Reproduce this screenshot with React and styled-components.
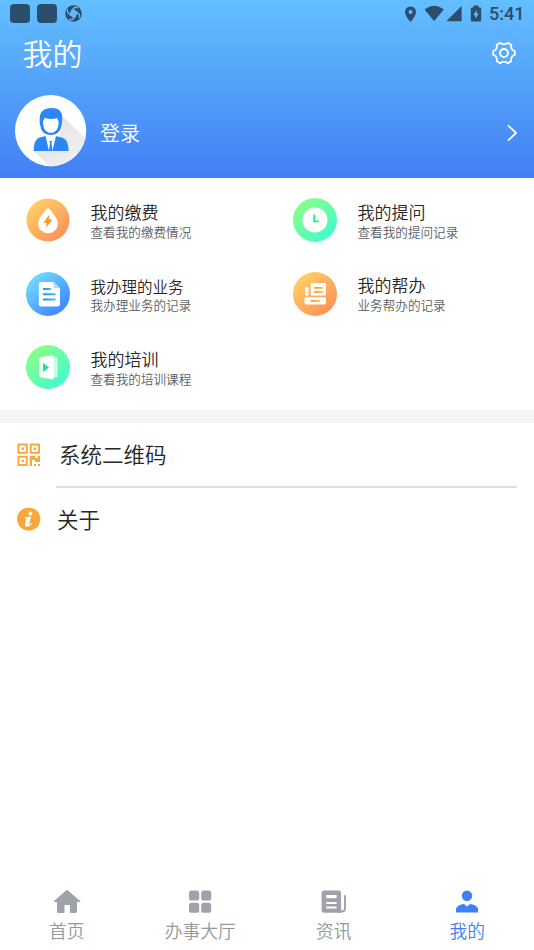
import styled, { createGlobalStyle } from "styled-components"

const menus = [
    { icon: "fee", title: "我的缴费", desc: "查看我的缴费情况", top: "4px" },
    { icon: "ask", title: "我的提问", desc: "查看我的提问记录", top: "4px" },
    { icon: "work", title: "我办理的业务", desc: "我办理业务的记录", small: true },
    { icon: "help", title: "我的帮办", desc: "业务帮办的记录" },
    { icon: "train", title: "我的培训", desc: "查看我的培训课程" },
];

const tabs = [
    { icon: "home", label: "首页" },
    { icon: "hall", label: "办事大厅" },
    { icon: "news", label: "资讯" },
    { icon: "mine", label: "我的", active: true },
];

const circleColors = {
    fee: ["#ffcf66", "#ff9159"],
    ask: ["#8bff86", "#42fbd0"],
    work: ["#72dcff", "#3f83ff"],
    help: ["#ffcf66", "#ff9159"],
    train: ["#8bff86", "#42fbd0"],
};

const MenuIcon = ({ name }) => (
    <svg width="44" height="44" viewBox="0 0 44 44">
        <defs>
            <linearGradient id={"bg-" + name} x1="0.15" y1="0.1" x2="0.85" y2="0.9">
                <stop offset="0" stopColor={circleColors[name][0]} />
                <stop offset="1" stopColor={circleColors[name][1]} />
            </linearGradient>
            <linearGradient id="line-blue" x1="0" x2="1">
                <stop offset="0" stopColor="#1688ff" />
                <stop offset="1" stopColor="#46c3fb" />
            </linearGradient>
            <linearGradient id="line-orange" x1="0" x2="1">
                <stop offset="0" stopColor="#ff8a1e" />
                <stop offset="1" stopColor="#ffbd55" />
            </linearGradient>
        </defs>
        <circle cx="22" cy="22" r={name === "fee" ? 21.5 : 22} fill={`url(#bg-${name})`} />
        {name === "fee" && (
            <>
                <path d="M22 9.5C19 13.5 12.2 19 12.2 26a9.8 9.3 0 0 0 19.6 0C31.8 19 25 13.5 22 9.5Z" fill="#fff" />
                <path d="M23.4 16.6 17.4 24.8h3.6l-1.3 5 6.9-8.3h-3.7Z" fill="#ff951c" />
            </>
        )}
        {name === "ask" && (
            <>
                <circle cx="22" cy="22" r="12.5" fill="#fff" />
                <path d="M21.2 16.5v6.8h4.8" fill="none" stroke="#24ed91" strokeWidth="1.8" />
            </>
        )}
        {name === "work" && (
            <>
                <path d="M15 10h12.5l6.5 6.3V32a2.5 2.5 0 0 1-2.5 2.5H15a2.2 2.2 0 0 1-2.2-2.2v-20A2.2 2.2 0 0 1 15 10Z" fill="#fff" />
                <path d="M27.5 10v4.8a1.5 1.5 0 0 0 1.5 1.5h5Z" fill="#b9d9ff" />
                <rect x="16.8" y="16" width="8.5" height="2" rx="1" fill="url(#line-blue)" />
                <rect x="16.8" y="21.3" width="13" height="2" rx="1" fill="url(#line-blue)" />
                <rect x="16.8" y="26.5" width="13" height="2" rx="1" fill="url(#line-blue)" />
            </>
        )}
        {name === "help" && (
            <>
                <rect x="12" y="15" width="3.5" height="8.5" rx="1" fill="#fff" />
                <rect x="17.7" y="11" width="15.2" height="12.5" rx="1" fill="#fff" />
                <rect x="21" y="15" width="9" height="1.8" rx=".9" fill="url(#line-orange)" />
                <rect x="21" y="19" width="9" height="1.8" rx=".9" fill="url(#line-orange)" />
                <path d="M12.5 25.3h19.4a1 1 0 0 1 1 1v4.2a2 2 0 0 1-2 2H13.5a2 2 0 0 1-2-2v-4.2a1 1 0 0 1 1-1Z" fill="#fff" />
                <rect x="17.5" y="28" width="9.5" height="1.7" rx=".8" fill="url(#line-orange)" />
            </>
        )}
        {name === "train" && (
            <>
                <path d="M27 11.5l2.5.4v20.4l-2.5.4Z" fill="#c8ffe9" />
                <path d="M29.4 12.2l2 .6v18.8l-2 .6Z" fill="#dcfff2" />
                <path d="M14.8 12 26 10.6q1.8 0 1.8 1.6v20.5q0 1.6-1.8 1.5l-11.2-2q-1.6-.3-1.6-1.6V13.5q0-1.3 1.6-1.5Z" fill="#fff" />
                <path d="M17 17.7v9.3l6-4.6Z" fill="#1ee58a" />
            </>
        )}
    </svg>
)

const TabIcon = ({ name }) => (
    <svg width="28" height="26" viewBox="0 0 28 26" fill="currentColor">
        {name === "home" && (
            <path d="M14 1.8 27.3 13.2q.4.7-.4.7H24v9.7q0 1.4-1.4 1.4h-4.7q-1 0-1-1V17h-5.4v7q0 1-1 1H5.2q-1.2 0-1.2-1.3v-9.8H1.1q-.8 0-.4-.7Z" />
        )}
        {name === "hall" && (
            <>
                <rect x="3" y="2.6" width="10.2" height="10" rx="2.6" />
                <rect x="15.2" y="2.6" width="10" height="10" rx="2.6" />
                <rect x="3" y="14.8" width="10.2" height="10" rx="2.6" />
                <rect x="15.2" y="14.8" width="10" height="10" rx="2.6" />
            </>
        )}
        {name === "news" && (
            <>
                <path fillRule="evenodd" d="M4.2 2.5h14.3q2.6 0 2.6 2.6V21q0 2 .8 3.7H4.2q-2.6 0-2.6-2.6V5.1q0-2.6 2.6-2.6ZM6.2 7v3.3h10.4V7Zm0 7v2h10.4v-2Zm0 4.6v2h10.4v-2Z" />
                <path d="M25 8v12.500q0 3-3.500 3H18" fill="none" stroke="currentColor" strokeWidth="1.9" strokeLinecap="round" />
            </>
        )}
        {name === "mine" && (
            <>
                <circle cx="14" cy="7.8" r="5.2" />
                <path d="M3 24.6v-2.5c0-3.3 3.2-5.3 8-6l3 2.5 3-2.5c4.8.7 8.1 2.7 8.1 6v2.5Z" />
            </>
        )}
    </svg>
)

const Avatar = () => (
    <svg width="72" height="72" viewBox="0 0 72 72">
        <defs>
            <clipPath id="face">
                <circle cx="35.6" cy="35.7" r="35.6" />
            </clipPath>
            <linearGradient id="shade" x1="0.2" y1="0.2" x2="0.8" y2="0.9">
                <stop offset="0" stopColor="#e4e4e4" />
                <stop offset="1" stopColor="#f1f1f1" />
            </linearGradient>
        </defs>
        <circle cx="35.6" cy="35.7" r="35.6" fill="#fff" />
        <path d="M46.5 20 76 49v28H40L18.7 56 45 40Z" fill="url(#shade)" clipPath="url(#face)" />
        <path d="M25.400 31c-.9-2.500-.7-5-.7-7.500 0-6.500 4.300-10.500 11.800-10.500 7.800 0 10.900 3.900 10.700 10.500 0 2.500.1 5-1 7.500C45.600 37 41 40 35.800 40c-5.200 0-9.600-3-10.400-9Z" fill="#2a87f3" />
        <path d="M28 28c-.2-2.500 1-3 1.600-5.300 4.100 1.700 8.500 1.700 12.700.2.300 2.300 1.600 2.900 1.400 5.100l-.6 3.200c-.7 4.100-3.900 6.600-7.300 6.600s-6.700-2.500-7.300-6.600Z" fill="#fff" />
        <path d="M29.5 41 35.7 45l6-4L37.2 56h-3.300Z" fill="#fff" />
        <path d="M18.7 56c0-5.5 1-10.5 4.300-12.700 2-1.2 5.200-1.300 7.600-2.300L34 56l1-8.500-.7-1.500h2.800l-.7 1.500 1 8.500L41 41c2.400 1 6 1.200 8 2.400 3.300 2.200 4.600 7 4.600 12.600Z" fill="#2a87f3" />
    </svg>
)

const StatusIcons = () => (
    <svg width="80" height="20" viewBox="0 0 80 20" fill="#2a4e6b">
        <path fillRule="evenodd" d="M7.5 2.5A5.500 5.500 0 0 0 2 8c0 4 5.500 10 5.500 10S13 12 13 8a5.500 5.500 0 0 0-5.500-5.500Zm0 3.600a2 2 0 1 1 0 4 2 2 0 0 1 0-4Z" />
        <path d="M21.500 5.500q9.800-7.700 19.300 0L31.100 17Z" />
        <path d="M58.600 2v15.200H43.300Z" />
        <path fillRule="evenodd" d="M70.500 1.500h5v2h1.500q1.200 0 1.200 1.200v11.500q0 1.200-1.200 1.200h-8q-1.200 0-1.200-1.200V4.700q0-1.200 1.200-1.200h1.500Zm3.200 4.400-3.500 5.300h2v3.900l3.700-5.700h-2.200Z" />
    </svg>
)

const SyncIcon = () => (
    <svg width="17" height="17" viewBox="0 0 17 17">
        <circle cx="8.5" cy="8.5" r="8.3" fill="#2a4e6b" />
        <path d="M8.500 3.800 13.200 8.500 8.500 13.200 3.800 8.500Z" fill="#60b8ff" />
        <path d="M6 6.500 9.500 2.500 13 2.500M10.500 6l4 3.500V13M11 10.500l-3.500 4H4M6.500 11l-4-3.500V4" fill="none" stroke="#60b8ff" strokeWidth="1.3" />
    </svg>
)

const GearIcon = () => (
    <svg width="26" height="24" viewBox="0 0 26 24" fill="none" stroke="#fff" strokeWidth="1.8" strokeLinejoin="round">
        <path d="M9.200 1.800Q13 4.800 16.800 1.800L20.200 3.800Q19.400 8.600 23.800 10V14Q19.400 15.400 20.200 20.200L16.800 22.200Q13 19.200 9.200 22.200L5.800 20.200Q6.600 15.400 2.200 14V10Q6.600 8.600 5.800 3.800Z" />
        <circle cx="13" cy="12" r="4" />
    </svg>
)

const QrIcon = () => (
    <svg width="24" height="24" viewBox="0 0 24 24" fill="#f8a83a">
        <g fill="none" stroke="#f8a83a" strokeWidth="1.9">
            <rect x="1.5" y="1.5" width="8.3" height="8.3" />
            <rect x="13.7" y="1.5" width="8.3" height="8.3" />
            <rect x="1.5" y="13.7" width="8.3" height="8.3" />
        </g>
        <path d="M4.5 4.5h2.4v2.4H4.5ZM16.7 4.5h2.4v2.4h-2.4ZM4.5 16.7h2.4v2.4H4.5Z" />
        <path d="M12.7 12.7h5.6v2.6h2.5v-2.6H23v6.2h-5v-2h-3V23h-2.3ZM17 21h2v2h-2ZM21 21h2v2h-2Z" />
    </svg>
)

const InfoIcon = () => (
    <svg width="24" height="24" viewBox="0 0 24 24">
        <circle cx="11.7" cy="12" r="11.6" fill="#f8a83a" />
        <circle cx="13.4" cy="6.5" r="1.9" fill="#fff" />
        <path d="M8 10.3q3-.2 6.200-1l-2.300 8.100q1 .2 2.500-1.400l.7.6q-2.400 3.200-5.200 3.100-2.500-.2-1.800-2.900l1.400-5-1.500-.4Z" fill="#fff" />
    </svg>
)

const App = () => {
    return(
        <>
        <GlobalStyle />
        <Container>
            <Header>
                <StatusBar>
                    <Notices>
                        <Square />
                        <Square />
                        <SyncIcon />
                    </Notices>
                    <StatusRight>
                        <StatusIcons />
                        <Clock>5:41</Clock>
                    </StatusRight>
                </StatusBar>
                <TitleBar>
                    <PageTitle>我的</PageTitle>
                    <GearIcon />
                </TitleBar>
                <Profile>
                    <Avatar />
                    <Login>登录</Login>
                    <Arrow width="12" height="18" viewBox="0 0 12 18" fill="none" stroke="#fff" strokeWidth="1.8">
                        <path d="M2 1.3 10 9l-8 7.7" />
                    </Arrow>
                </Profile>
            </Header>
            <MenuGrid>
                {menus.map((data) => (
                    <MenuItem key={data.icon}>
                        <MenuIcon name={data.icon} />
                        <MenuText $top={data.top}>
                            <MenuTitle $small={data.small}>{data.title}</MenuTitle>
                            <MenuDesc $small={data.small}>{data.desc}</MenuDesc>
                        </MenuText>
                    </MenuItem>
                ))}
            </MenuGrid>
            <Gap />
            <List>
                <ListRow $height="63px">
                    <QrIcon />
                    <ListLabel $left="18px">系统二维码</ListLabel>
                </ListRow>
                <Divider />
                <ListRow $height="62px">
                    <InfoIcon />
                    <ListLabel $left="16px">关于</ListLabel>
                </ListRow>
            </List>
            <TabBar>
                {tabs.map((tab) => (
                    <Tab key={tab.icon} $active={tab.active}>
                        <TabIcon name={tab.icon} />
                        <TabLabel $active={tab.active}>{tab.label}</TabLabel>
                    </Tab>
                ))}
            </TabBar>
        </Container>
        </>
    )
}

const GlobalStyle = createGlobalStyle`
    body {
        margin: 0;
        font-family: "Noto Sans CJK SC", sans-serif;
        font-weight: 350;
    }
    svg {
        display: block;
        flex-shrink: 0;
    }
`
const Container = styled.div`
    width: 100%;
    height: 950px;
    background-color: white;
    display: flex;
    flex-direction: column;
    overflow: hidden;
`
const Header = styled.div`
    height: 178px;
    background: linear-gradient(#64bfff, #417ff4);
    color: white;
    flex-shrink: 0;
`
const StatusBar = styled.div`
    height: 27px;
    display: flex;
    align-items: center;
    justify-content: space-between;
    padding: 0 10px;
    box-sizing: border-box;
`
const Notices = styled.div`
    display: flex;
    align-items: center;
    gap: 7px;
    svg {
        margin-left: 1px;
    }
`
const Square = styled.div`
    width: 20px;
    height: 19px;
    border-radius: 4px;
    background-color: #2a4e6b;
`
const StatusRight = styled.div`
    display: flex;
    align-items: center;
    gap: 6px;
`
const Clock = styled.div`
    font-family: Roboto, sans-serif;
    font-size: 18px;
    font-weight: 500;
    line-height: 26px;
    color: #2a4e6b;
    margin-right: -0.5px;
`
const TitleBar = styled.div`
    height: 51px;
    display: flex;
    align-items: center;
    justify-content: space-between;
    padding: 0 17px 0 22.5px;
`
const PageTitle = styled.div`
    font-size: 30px;
    line-height: 50px;
    margin-top: -1px;
`
const Profile = styled.div`
    display: flex;
    align-items: center;
    margin-top: 17px;
    padding: 0 16px 0 15px;
`
const Login = styled.div`
    flex: 1;
    font-size: 20px;
    line-height: 30px;
    margin-left: 13px;
    padding-top: 3px;
`
const Arrow = styled.svg`
    margin-top: 3px;
`
const MenuGrid = styled.div`
    height: 232px;
    box-sizing: border-box;
    padding-top: 5px;
    display: grid;
    grid-template-columns: 1fr 1fr;
    grid-auto-rows: 73.7px;
    flex-shrink: 0;
`
const MenuItem = styled.div`
    display: flex;
    align-items: center;
    padding-left: 26px;
`
const MenuText = styled.div`
    margin-left: 20.5px;
    padding-top: ${({ $top }) => $top || "2px"};
`
const MenuTitle = styled.div`
    font-size: ${({ $small }) => ($small ? "15.5px" : "17px")};
    line-height: 20px;
    color: #262626;
`
const MenuDesc = styled.div`
    font-size: 12.6px;
    line-height: ${({ $small }) => ($small ? "17px" : "19px")};
    color: #5c5e64;
`
const Gap = styled.div`
    height: 13px;
    background-color: #f4f5f6;
    flex-shrink: 0;
`
const List = styled.div`
    flex: 1;
`
const ListRow = styled.div`
    height: ${({ $height }) => $height};
    display: flex;
    align-items: center;
    padding-left: 17px;
`
const ListLabel = styled.div`
    font-size: 21.5px;
    line-height: 32px;
    margin-left: ${({ $left }) => $left};
    margin-top: -1px;
    color: #262626;
`
const Divider = styled.div`
    height: 2px;
    margin: 0 17px 0 56px;
    background-color: #dedede;
`
const TabBar = styled.div`
    height: 62px;
    display: grid;
    grid-template-columns: repeat(4, 1fr);
    flex-shrink: 0;
`
const Tab = styled.div`
    display: flex;
    flex-direction: column;
    align-items: center;
    color: ${({ $active }) => ($active ? "#3f80f5" : "#a0a2aa")};
`
const TabLabel = styled.div`
    font-size: 17.7px;
    line-height: 26px;
    margin-top: 3px;
    color: ${({ $active }) => ($active ? "#3f80f5" : "#949a97")};
`

export default App;
